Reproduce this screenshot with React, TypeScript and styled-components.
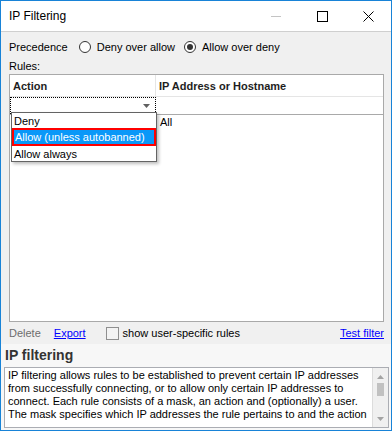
import styled, { createGlobalStyle } from "styled-components";

const GlobalStyle = createGlobalStyle`
  html, body {
    margin: 0;
    padding: 0;
    background: #ffffff;
  }
  body {
    font-family: "Liberation Sans", Arial, sans-serif;
    font-size: 11px;
    color: #000000;
  }
`;

const Window = styled.div`
  width: 392px;
  height: 431px;
  box-sizing: border-box;
  border: 1px solid #1883d7;
  display: flex;
  flex-direction: column;
  overflow: hidden;
  background: #f0f0f0;
`;

const TitleBar = styled.div`
  height: 30px;
  flex: none;
  display: flex;
  align-items: center;
  background: #ffffff;
  border-bottom: 1px solid #cfcfcf;
`;

const Title = styled.div`
  flex: 1;
  padding-left: 8px;
  font-size: 12px;
  color: #000;
`;

const CaptionButton = styled.div`
  width: 46px;
  height: 30px;
  display: flex;
  align-items: center;
  justify-content: center;
`;

const Client = styled.div`
  flex: 1;
  display: flex;
  flex-direction: column;
  padding: 0 7px 0 8px;
`;

const PrecedenceRow = styled.div`
  height: 17px;
  margin-top: 6px;
  display: flex;
  align-items: center;
`;

const RadioOption = styled.label<{ $gap: number }>`
  display: flex;
  align-items: center;
  margin-left: ${(p) => p.$gap}px;
`;

const RadioCircle = styled.span<{ $checked?: boolean }>`
  width: 12px;
  height: 12px;
  box-sizing: border-box;
  border: 1px solid #333333;
  border-radius: 50%;
  background: #ffffff;
  margin-right: 6px;
  display: flex;
  align-items: center;
  justify-content: center;

  &::after {
    content: "";
    width: 6px;
    height: 6px;
    border-radius: 50%;
    background: ${(p) => (p.$checked ? "#333333" : "transparent")};
  }
`;

const RulesLabel = styled.div`
  margin-top: 5px;
  line-height: 13px;
`;

const ListView = styled.div`
  position: relative;
  margin-top: 1px;
  height: 248px;
  box-sizing: border-box;
  border: 1px solid #a9a9a9;
  background: #ffffff;
`;

const Row = styled.div<{ $height: number; $line?: string }>`
  display: grid;
  grid-template-columns: 146px 1fr;
  height: ${(p) => p.$height}px;
  border-bottom: ${(p) => (p.$line ? `1px solid ${p.$line}` : "none")};
`;

const HeaderCell = styled.div<{ $divider?: boolean }>`
  display: flex;
  align-items: center;
  padding-left: 3px;
  font-weight: bold;
  color: #1e1e1e;
  border-right: ${(p) => (p.$divider ? "1px solid #e5e5e5" : "none")};
`;

const ComboCell = styled.div`
  box-sizing: border-box;
  border: 1px dotted #000000;
  display: flex;
  align-items: center;
  justify-content: flex-end;
  padding-right: 5px;
`;

const Cell = styled.div`
  display: flex;
  align-items: center;
  padding-left: 4px;
`;

const DropList = styled.div`
  position: absolute;
  left: 1px;
  top: 37px;
  width: 146px;
  box-sizing: border-box;
  border: 1px solid #646464;
  background: #ffffff;
  box-shadow: 2px 2px 3px rgba(0, 0, 0, 0.25);
`;

const DropItem = styled.div<{ $selected?: boolean }>`
  height: ${(p) => (p.$selected ? 18 : 15)}px;
  box-sizing: border-box;
  display: flex;
  align-items: center;
  padding-left: ${(p) => (p.$selected ? 1 : 2)}px;
  background: ${(p) => (p.$selected ? "#0a98f8" : "transparent")};
  color: ${(p) => (p.$selected ? "#ffffff" : "#000000")};
  border: ${(p) => (p.$selected ? "2px solid #ff0000" : "none")};
`;

const Footer = styled.div`
  height: 18px;
  margin-top: 2px;
  display: flex;
  align-items: center;
`;

const DisabledText = styled.span`
  color: #6d6d6d;
`;

const Link = styled.a<{ $push?: boolean }>`
  color: #0000ff;
  text-decoration: underline;
  margin-left: ${(p) => (p.$push ? "auto" : "13px")};
`;

const CheckOption = styled.label`
  display: flex;
  align-items: center;
  margin-left: 20px;
`;

const CheckBox = styled.span`
  width: 13px;
  height: 13px;
  box-sizing: border-box;
  border: 1px solid #8f8f8f;
  background: #f3f3f3;
  margin-right: 4px;
`;

const InfoPanel = styled.div`
  flex: 1;
  display: flex;
  flex-direction: column;
  margin: 2px -7px 0 -8px;
  padding: 0 2px 2px 3px;
  background: #f7f7f7;
`;

const InfoHeading = styled.div`
  padding: 3px 0 0 1px;
  line-height: 16px;
  font-size: 14px;
  font-weight: bold;
  color: #333333;
`;

const InfoBox = styled.div`
  flex: 1;
  margin-top: 4px;
  display: flex;
  box-sizing: border-box;
  border: 1px solid #abadb3;
  background: #ffffff;
  overflow: hidden;
`;

const InfoText = styled.div`
  flex: 1;
  padding: 1px 0 0 3px;
  line-height: 13px;
  white-space: nowrap;
  overflow: hidden;
`;

const ScrollBar = styled.div`
  width: 16px;
  border-left: 1px solid #dcdcdc;
  background: #f0f0f0;
  display: flex;
  flex-direction: column;
  align-items: center;
  justify-content: space-between;
  padding: 7px 0 6px;
  box-sizing: border-box;
`;

const Thumb = styled.div`
  width: 7px;
  height: 13px;
  background: #c1c1c1;
  margin-bottom: auto;
  margin-top: 4px;
`;

const Arrow = ({ down }: { down?: boolean }) => (
  <svg width="7" height="4" viewBox="0 0 7 4">
    <path d={down ? "M0 0 L7 0 L3.5 4 Z" : "M0 4 L7 4 L3.5 0 Z"} fill="#a3a3a3" />
  </svg>
);

const description = [
  "IP filtering allows rules to be established to prevent certain IP addresses",
  "from successfully connecting, or to allow only certain IP addresses to",
  "connect. Each rule consists of a mask, an action and (optionally) a user.",
  "The mask specifies which IP addresses the rule pertains to and the action",
];

export default function App() {
  return (
    <>
      <GlobalStyle />
      <Window>
        <TitleBar>
          <Title>IP Filtering</Title>
          <CaptionButton>
            <svg width="10" height="10" viewBox="0 0 10 10">
              <line x1="0" y1="5.5" x2="10" y2="5.5" stroke="#c4c4c4" strokeWidth="1" />
            </svg>
          </CaptionButton>
          <CaptionButton>
            <svg width="11" height="11" viewBox="0 0 11 11">
              <rect x="0.5" y="0.5" width="10" height="10" fill="none" stroke="#000" strokeWidth="1" />
            </svg>
          </CaptionButton>
          <CaptionButton>
            <svg width="11" height="11" viewBox="0 0 11 11">
              <path d="M0.5 0.5 L10.5 10.5 M10.5 0.5 L0.5 10.5" stroke="#000" strokeWidth="1" />
            </svg>
          </CaptionButton>
        </TitleBar>

        <Client>
          <PrecedenceRow>
            <span>Precedence</span>
            <RadioOption $gap={11}>
              <RadioCircle />
              Deny over allow
            </RadioOption>
            <RadioOption $gap={9}>
              <RadioCircle $checked />
              Allow over deny
            </RadioOption>
          </PrecedenceRow>

          <RulesLabel>Rules:</RulesLabel>

          <ListView>
            <Row $height={21} $line="#e5e5e5">
              <HeaderCell $divider>Action</HeaderCell>
              <HeaderCell>IP Address or Hostname</HeaderCell>
            </Row>
            <Row $height={17} $line="#a9a9a9">
              <ComboCell>
                <svg width="7" height="4" viewBox="0 0 7 4">
                  <path d="M0 0 L7 0 L3.5 4 Z" fill="#606060" />
                </svg>
              </ComboCell>
              <Cell />
            </Row>
            <Row $height={14}>
              <Cell />
              <Cell>All</Cell>
            </Row>

            <DropList>
              <DropItem>Deny</DropItem>
              <DropItem $selected>Allow (unless autobanned)</DropItem>
              <DropItem>Allow always</DropItem>
            </DropList>
          </ListView>

          <Footer>
            <DisabledText>Delete</DisabledText>
            <Link>Export</Link>
            <CheckOption>
              <CheckBox />
              show user-specific rules
            </CheckOption>
            <Link $push>Test filter</Link>
          </Footer>

          <InfoPanel>
            <InfoHeading>IP filtering</InfoHeading>
            <InfoBox>
              <InfoText>
                {description.map((line) => (
                  <div key={line}>{line}</div>
                ))}
              </InfoText>
              <ScrollBar>
                <Arrow />
                <Thumb />
                <Arrow down />
              </ScrollBar>
            </InfoBox>
          </InfoPanel>
        </Client>
      </Window>
    </>
  );
}
